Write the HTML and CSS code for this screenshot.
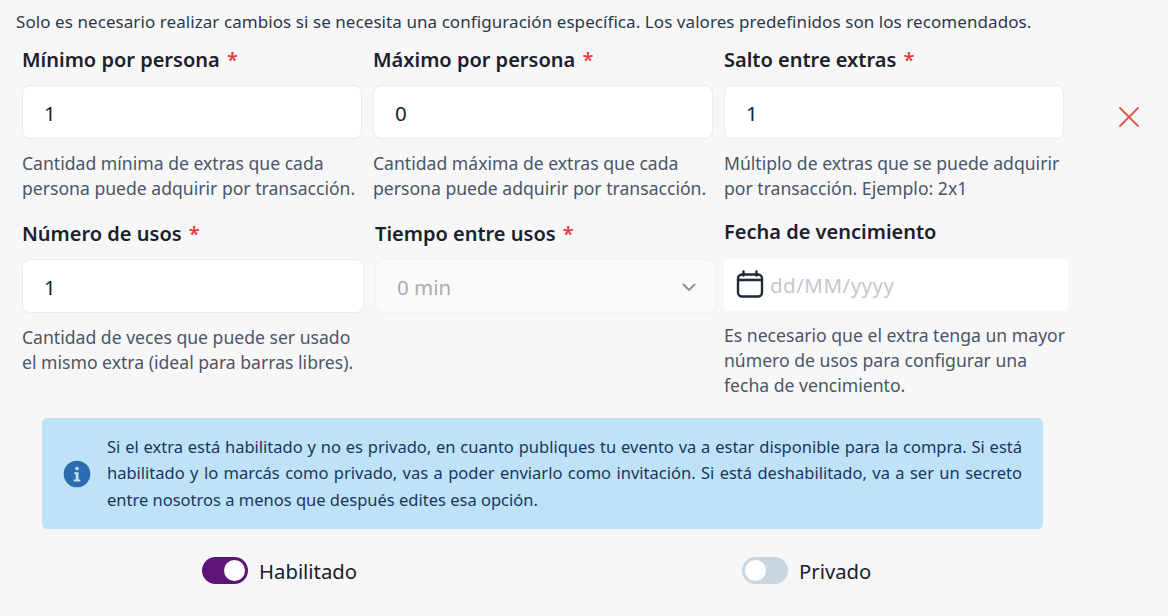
FILE: index.html
```html
<!DOCTYPE html>
<html lang="es">
<head>
<meta charset="utf-8">
<title>Extras</title>
<link rel="stylesheet" href="styles.css">
</head>
<body>
<p class="intro">Solo es necesario realizar cambios si se necesita una configuración específica. Los valores predefinidos son los recomendados.</p>
<div class="row row-one">
  <div class="field">
    <div class="label">Mínimo por persona <span class="req">*</span></div>
    <div class="input">1</div>
    <p class="help">Cantidad mínima de extras que cada persona puede adquirir por transacción.</p>
  </div>
  <div class="field">
    <div class="label">Máximo por persona <span class="req">*</span></div>
    <div class="input">0</div>
    <p class="help">Cantidad máxima de extras que cada persona puede adquirir por transacción.</p>
  </div>
  <div class="field">
    <div class="label">Salto entre extras <span class="req">*</span></div>
    <div class="input">1</div>
    <p class="help">Múltiplo de extras que se puede adquirir por transacción. Ejemplo: 2x1</p>
  </div>
  <button class="remove" aria-label="Eliminar">
    <svg width="22" height="22" viewBox="0 0 22 22" fill="none" stroke="#e2574c" stroke-width="1.8" stroke-linecap="round"><path d="M2 2 20 20M20 2 2 20"/></svg>
  </button>
</div>
<div class="row row-two">
  <div class="field f-uses">
    <div class="label">Número de usos <span class="req">*</span></div>
    <div class="input">1</div>
    <p class="help">Cantidad de veces que puede ser usado el mismo extra (ideal para barras libres).</p>
  </div>
  <div class="field f-time">
    <div class="label">Tiempo entre usos <span class="req">*</span></div>
    <div class="input select">0 min
      <svg width="14" height="9" viewBox="0 0 14 9" fill="none" stroke="#8f9296" stroke-width="2" stroke-linecap="round" stroke-linejoin="round"><path d="M1.5 1.5 7 7l5.5-5.5"/></svg>
    </div>
  </div>
  <div class="field f-date">
    <div class="label label-date">Fecha de vencimiento</div>
    <div class="input date">
      <svg class="cal" width="28" height="28" viewBox="0 0 28 28" fill="none" stroke="#1f2937" stroke-width="2.400" stroke-linecap="round" stroke-linejoin="round"><rect x="2" y="4.500" width="24" height="22" rx="4"/><path d="M2 10h24M7.500 1.500v4M20.500 1.500v4"/></svg>
      <span class="placeholder">dd/MM/yyyy</span>
    </div>
    <p class="help">Es necesario que el extra tenga un mayor número de usos para configurar una fecha de vencimiento.</p>
  </div>
</div>
<div class="alert">
  <svg class="alert-icon" width="28" height="28" viewBox="0 0 28 28"><circle cx="14" cy="14" r="13.300" fill="#2b6cb0"/><path fill="#bee3f8" d="M14 6.800a1.800 1.800 0 1 1 0 3.600 1.800 1.800 0 0 1 0-3.600zM11.300 12.300h4.200v7.300h1.800v1.900h-6.600v-1.900h2.100v-5.400h-1.500z"/></svg>
  <p>Si el extra está habilitado y no es privado, en cuanto publiques tu evento va a estar disponible para la compra. Si está habilitado y lo marcás como privado, vas a poder enviarlo como invitación. Si está deshabilitado, va a ser un secreto entre nosotros a menos que después edites esa opción.</p>
</div>
<div class="toggles">
  <div class="toggle-item">
    <span class="switch on"><span class="knob"></span></span>
    <span class="toggle-text">Habilitado</span>
  </div>
  <div class="toggle-item">
    <span class="switch"><span class="knob"></span></span>
    <span class="toggle-text">Privado</span>
  </div>
</div>
</body>
</html>
```
FILE: styles.css
```css
* { box-sizing: border-box; }
html, body { height: 100%; }
body {
  margin: 0;
  width: 1168px;
  height: 616px;
  overflow: hidden;
  background: #f7f7f8;
  font-family: "Noto Sans", "Open Sans", sans-serif;
  color: #1a202c;
  padding: 11px 0 0 22px;
}
.intro {
  margin: 0 0 0 -6px;
  font-size: 17px;
  line-height: 22px;
  letter-spacing: 0.07px;
  color: #2d3748;
  white-space: nowrap;
}
.row { display: flex; }
.row-one { gap: 11px; margin-top: 12px; height: 174px; }
.row-two { height: 190px; }
.field { width: 340px; flex: none; }
.label {
  font-size: 20px;
  font-weight: 600;
  line-height: 29px;
  height: 40px;
  color: #1a202c;
}
.req { color: #e53e3e; margin-left: 2px; }
.input {
  height: 54px;
  background: #fff;
  border: 1px solid #e9ebef;
  border-radius: 8px;
  padding: 2px 21px 0;
  display: flex;
  align-items: center;
  font-size: 20.500px;
  color: #1a202c;
}
.help {
  margin: 12px 0 0;
  font-size: 17.600px;
  line-height: 25px;
  color: #4a5568;
}
.remove {
  border: 0;
  background: none;
  padding: 0;
  margin: 61px 0 0 43px;
  width: 22px;
  height: 22px;
  display: flex;
}
.f-uses { width: 342px; }
.f-time { width: 342px; margin-left: 11px; }
.f-date { width: 344px; margin-left: 7px; }
.select {
  justify-content: space-between;
  background: #fafafa;
  border-color: #f1f1f3;
  color: #a9acb1;
  padding-right: 20px;
}
.label-date { height: 42px; margin-top: -2px; }
.date {
  justify-content: flex-start;
  gap: 6px;
  border: 0;
  border-radius: 4px;
  padding: 0 12px;
  height: 52px;
  color: #c3c8cf;
}
.cal { margin-bottom: 3px; }
.placeholder { letter-spacing: 0.5px; }
.f-date .help { margin-top: 12px; }
.alert {
  width: 1001px;
  height: 111px;
  margin: 9px 0 0 20px;
  background: #bee3f8;
  border-radius: 5px;
  display: flex;
  align-items: center;
  padding: 0 21px;
  gap: 16px;
}
.alert-icon { flex: none; }
.alert p {
  margin: 0;
  font-size: 16.500px;
  line-height: 26.500px;
  color: #1a365d;
  text-align: justify;
}
.toggles { display: flex; margin: 27px 0 0 180px; }
.toggle-item {
  flex: none;
  display: flex;
  align-items: center;
  gap: 11px;
  font-size: 20.300px;
  height: 28px;
  color: #1a202c;
}
.toggle-item:first-child { width: 540px; }
.toggle-text { padding-top: 2px; }
.switch {
  width: 46px;
  height: 27px;
  border-radius: 14px;
  background: #cbd5e0;
  padding: 3px;
  display: flex;
}
.switch.on { background: #5c1478; justify-content: flex-end; }
.knob { width: 21px; height: 21px; border-radius: 50%; background: #fff; }
```
